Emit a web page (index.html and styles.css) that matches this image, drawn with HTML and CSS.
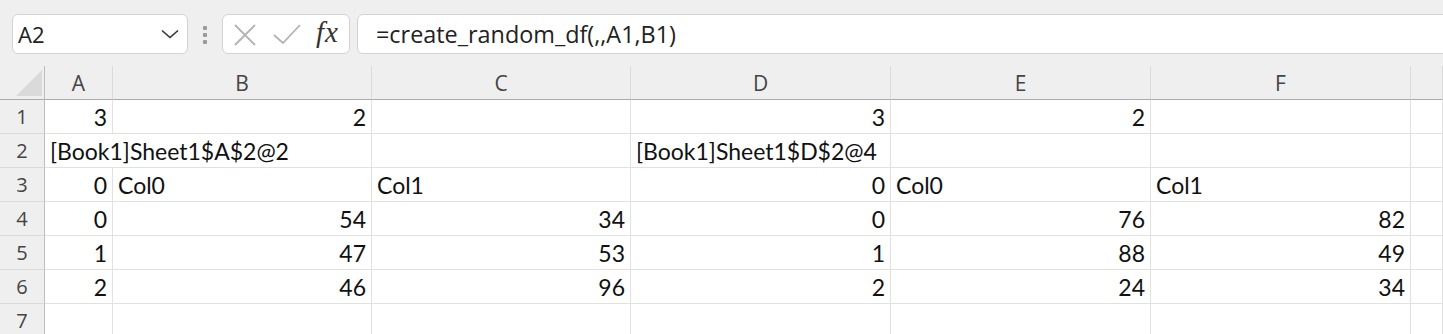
FILE: index.html
```html
<!DOCTYPE html>
<html>
<head>
<meta charset="utf-8">
<link rel="stylesheet" href="styles.css">
</head>
<body>
<div class="app">
  <div class="toolbar">
    <div class="namebox">
      <span class="name">A2</span>
      <svg class="chev" width="18" height="10" viewBox="0 0 18 10"><path d="M1 1.5 L9 8.5 L17 1.5" fill="none" stroke="#333" stroke-width="1.6"/></svg>
    </div>
    <div class="dots"><i></i><i></i><i></i></div>
    <div class="fbtns">
      <svg class="ic-x" width="22" height="22" viewBox="0 0 22 22"><path d="M1 1 L21 21 M21 1 L1 21" stroke="#b3b3b3" stroke-width="1.8" fill="none"/></svg>
      <svg class="ic-ok" width="28" height="20" viewBox="0 0 28 20"><path d="M1 11 L10 19 L27 1" stroke="#b3b3b3" stroke-width="1.8" fill="none"/></svg>
      <span class="fx">fx</span>
    </div>
    <div class="finput">=create_random_df(,,A1,B1)</div>
  </div>
  <div class="sheet">
    <div class="corner"><span class="tri"></span></div>
    <div class="ch">A</div><div class="ch">B</div><div class="ch">C</div><div class="ch">D</div><div class="ch">E</div><div class="ch">F</div><div class="ch"></div>

    <div class="rh">1</div>
    <div class="c r">3</div><div class="c r">2</div><div class="c"></div><div class="c r">3</div><div class="c r">2</div><div class="c"></div><div class="c"></div>

    <div class="rh">2</div>
    <div class="c span2">[Book1]Sheet1$A$2@2</div><div class="c"></div><div class="c">[Book1]Sheet1$D$2@4</div><div class="c"></div><div class="c"></div><div class="c"></div>

    <div class="rh">3</div>
    <div class="c r">0</div><div class="c">Col0</div><div class="c">Col1</div><div class="c r">0</div><div class="c">Col0</div><div class="c">Col1</div><div class="c"></div>

    <div class="rh">4</div>
    <div class="c r">0</div><div class="c r">54</div><div class="c r">34</div><div class="c r">0</div><div class="c r">76</div><div class="c r">82</div><div class="c"></div>

    <div class="rh">5</div>
    <div class="c r">1</div><div class="c r">47</div><div class="c r">53</div><div class="c r">1</div><div class="c r">88</div><div class="c r">49</div><div class="c"></div>

    <div class="rh">6</div>
    <div class="c r">2</div><div class="c r">46</div><div class="c r">96</div><div class="c r">2</div><div class="c r">24</div><div class="c r">34</div><div class="c"></div>

    <div class="rh">7</div>
    <div class="c"></div><div class="c"></div><div class="c"></div><div class="c"></div><div class="c"></div><div class="c"></div><div class="c"></div>
  </div>
</div>
</body>
</html>
```
FILE: styles.css
```css
* { box-sizing: border-box; }
html, body { margin: 0; padding: 0; background: #ffffff; }
body { width: 1443px; height: 334px; overflow: hidden; }
.app { width: 1443px; }

.toolbar {
  display: flex;
  align-items: flex-start;
  height: 66px;
  background: #efefef;
  padding: 14px 0 0 12px;
  overflow: hidden;
}
.namebox {
  width: 176px;
  height: 40px;
  background: #fff;
  border: 1px solid #d3d3d3;
  border-radius: 6px;
  display: flex;
  align-items: center;
  justify-content: space-between;
  padding: 0 8px 0 5px;
}
.name {
  font-family: "Open Sans", "Noto Sans", sans-serif;
  font-size: 22px;
  color: #222;
}
.dots {
  margin: 12px 15px 0 15px;
  display: flex;
  flex-direction: column;
  gap: 3px;
}
.dots i {
  display: block;
  width: 4px;
  height: 4px;
  border-radius: 1px;
  background: #9a9a9a;
}
.fbtns {
  width: 128px;
  height: 40px;
  background: #fff;
  border: 1px solid #d3d3d3;
  border-radius: 6px;
  display: flex;
  align-items: center;
  padding: 0 0 0 11px;
}
.ic-x { margin-top: 1px; }
.ic-ok { margin-left: 17px; margin-top: -1px; }
.fx {
  margin-left: 15px;
  font-family: "Liberation Serif", "DejaVu Serif", serif;
  font-style: italic;
  font-size: 29px;
  letter-spacing: 1px;
  color: #333;
  line-height: 1;
  margin-top: -4px;
}
.finput {
  margin-left: 7px;
  flex: 1;
  margin-right: -12px;
  height: 40px;
  background: #fff;
  border: 1px solid #d3d3d3;
  border-radius: 6px;
  display: flex;
  align-items: center;
  padding: 0 0 1px 18px;
  font-family: "Open Sans", "Noto Sans", sans-serif;
  font-size: 23.4px;
  color: #222;
  white-space: nowrap;
}

.sheet {
  display: grid;
  grid-template-columns: 45px 68px 259px 259px 260px 260px 260px 1fr;
  grid-auto-rows: 34px;
}
.corner {
  background: #efefef;
  border-right: 1px solid #bdbdbd;
  border-bottom: 1px solid #ababab;
  position: relative;
}
.tri {
  position: absolute;
  left: 16px;
  top: 4px;
  width: 0;
  height: 0;
  border-style: solid;
  border-width: 0 0 26px 26px;
  border-color: transparent transparent #dadada transparent;
}
.ch {
  background: #efefef;
  border-right: 1px solid #dadada;
  border-bottom: 1px solid #ababab;
  display: flex;
  align-items: center;
  justify-content: center;
  font-family: "Open Sans", "Noto Sans", sans-serif;
  font-size: 21px;
  color: #444;
  padding-top: 1px;
}
.rh {
  background: #efefef;
  border-right: 1px solid #bdbdbd;
  border-bottom: 1px solid #dadada;
  display: flex;
  align-items: flex-end;
  justify-content: center;
  font-family: "Open Sans", "Noto Sans", sans-serif;
  font-size: 20px;
  color: #444;
  padding-bottom: 1px;
  line-height: 30px;
}
.c {
  border-right: 1px solid #e1e1e1;
  border-bottom: 1px solid #e1e1e1;
  display: flex;
  align-items: flex-end;
  padding: 0 5px 1px 5px;
  font-family: "Lato", "Liberation Sans", sans-serif;
  font-size: 23px;
  line-height: 30px;
  color: #111;
  white-space: nowrap;
  overflow: visible;
}
.c.r { justify-content: flex-end; }
.c.span2 { grid-column: span 2; }
```
